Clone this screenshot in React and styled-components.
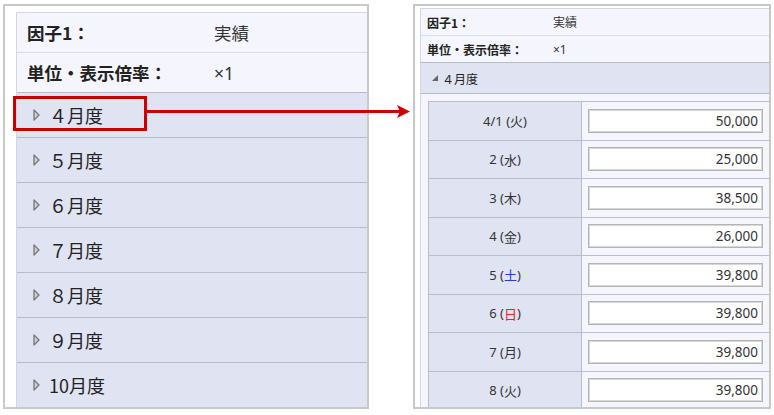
import React from 'react';
import styled, { createGlobalStyle } from 'styled-components';

const Global = createGlobalStyle`
  html, body { margin: 0; padding: 0; background: #fff; }
  body { font-family: "Noto Sans CJK JP", "Noto Sans", sans-serif; color: #222; }
`;

const Stage = styled.div`
  position: relative;
  width: 774px;
  height: 415px;
  overflow: hidden;
  box-sizing: border-box;
  padding: 4px 0 0 3px;
  display: flex;
  align-items: flex-start;
`;

const Panel = styled.div`
  box-sizing: border-box;
  width: ${(p) => p.$w}px;
  height: 405px;
  margin-left: ${(p) => p.$ml || 0}px;
  border: 2px solid #c8c8c8;
  padding: ${(p) => p.$pad};
  background: #fff;
  overflow: hidden;
`;

const Sheet = styled.div`
  height: 100%;
  border-left: 1px solid #d2d5e4;
  border-top: 1px solid #d2d5e4;
  display: flex;
  flex-direction: column;
`;

const InfoRow = styled.div`
  flex: none;
  box-sizing: border-box;
  height: ${(p) => p.$h}px;
  display: grid;
  grid-template-columns: ${(p) => p.$label}px 1fr;
  align-items: center;
  padding-left: ${(p) => p.$pl}px;
  background: #f5f6fd;
  border-bottom: 1px solid #d6d9e8;
  font-size: ${(p) => p.$fs}px;
`;

const Label = styled.span`
  font-weight: 700;
  color: #222;
`;

const Value = styled.span`
  font-family: "Noto Sans", "Noto Sans CJK JP", sans-serif;
  color: #333;
`;

const MonthRow = styled.div`
  flex: none;
  box-sizing: border-box;
  height: ${(p) => p.$h}px;
  display: flex;
  align-items: center;
  gap: ${(p) => p.$gap}px;
  padding-left: ${(p) => p.$pl}px;
  background: #e0e3f1;
  border-top: 1px solid #b7bbca;
  margin-top: -1px;
  border-bottom: 1px solid #b7bbca;
  font-size: ${(p) => p.$fs}px;
  color: #222;
`;

const MonthBody = styled.div`
  flex: 1;
  background: #f5f6fd;
  padding: 7px 0 0 7px;
  overflow: hidden;
`;

const Table = styled.div`
  border-left: 1px solid #b9bdcc;
  border-top: 1px solid #b9bdcc;
`;

const DayRow = styled.div`
  display: grid;
  grid-template-columns: 153px 1fr;
  height: 38.5px;
`;

const DateCell = styled.div`
  background: #e0e3f1;
  border-right: 1px solid #b9bdcc;
  border-bottom: 1px solid #b9bdcc;
  display: flex;
  align-items: center;
  justify-content: center;
  font-family: "Noto Sans", "Noto Sans CJK JP", sans-serif;
  font-size: 13px;
  color: #333;
  white-space: pre;
`;

const Dow = styled.span`
  font-family: "Noto Sans CJK JP", sans-serif;
  color: ${(p) => p.$c || '#333'};
`;

const ValueCell = styled.div`
  background: #f5f6fd;
  border-bottom: 1px solid #b9bdcc;
  display: flex;
  align-items: center;
  padding: 0 6px;
`;

const NumInput = styled.input`
  box-sizing: border-box;
  width: 100%;
  height: 24px;
  border: 1px solid #b4b4b4;
  box-shadow: inset 0 0 0 1px #d8d8d8;
  background: #fff;
  text-align: right;
  padding: 0 4px;
  font-family: "Noto Sans", sans-serif;
  font-size: 13.5px;
  color: #333;
  outline: none;
`;

const Highlight = styled.div`
  position: absolute;
  left: 13px;
  top: 96px;
  width: 134px;
  height: 35px;
  box-sizing: border-box;
  border: 3px solid #cc0000;
  pointer-events: none;
`;

const ArrowSvg = styled.svg`
  position: absolute;
  left: 0;
  top: 0;
  pointer-events: none;
`;

const Collapsed = () => (
  <svg width="7" height="12" viewBox="0 0 7 12">
    <polygon points="1,1 6,6 1,11" fill="#d0d0d0" stroke="#787878" strokeWidth="1.3" strokeLinejoin="round" />
  </svg>
);

const Expanded = () => (
  <svg width="6" height="6" viewBox="0 0 6 6">
    <polygon points="6,0 6,6 0,6" fill="#666" />
  </svg>
);

const months = ['４月度', '５月度', '６月度', '７月度', '８月度', '９月度', '10月度'];

const days = [
  { d: '4/1', w: '火', v: '50,000' },
  { d: '2', w: '水', v: '25,000' },
  { d: '3', w: '木', v: '38,500' },
  { d: '4', w: '金', v: '26,000' },
  { d: '5', w: '土', v: '39,800', c: '#1f3fd6' },
  { d: '6', w: '日', v: '39,800', c: '#d8262c' },
  { d: '7', w: '月', v: '39,800' },
  { d: '8', w: '火', v: '39,800' },
];

export default function App() {
  return (
    <>
      <Global />
      <Stage>
        <Panel $w={366} $pad="6px 0 0 11px">
          <Sheet>
            <InfoRow $h={40} $label={187} $pl={10} $fs={17.5}>
              <Label>因子1：</Label>
              <Value>実績</Value>
            </InfoRow>
            <InfoRow $h={40} $label={187} $pl={10} $fs={17.5}>
              <Label>単位・表示倍率：</Label>
              <Value>×1</Value>
            </InfoRow>
            {months.map((m) => (
              <MonthRow key={m} $h={46} $pl={16} $gap={9} $fs={18}>
                <Collapsed />
                <span>{m}</span>
              </MonthRow>
            ))}
          </Sheet>
        </Panel>

        <Panel $w={358} $ml={44} $pad="2px 0 0 5px">
          <Sheet>
            <InfoRow $h={27} $label={126} $pl={6} $fs={12}>
              <Label>因子1：</Label>
              <Value>実績</Value>
            </InfoRow>
            <InfoRow $h={27} $label={126} $pl={6} $fs={12}>
              <Label>単位・表示倍率：</Label>
              <Value>×1</Value>
            </InfoRow>
            <MonthRow $h={32} $pl={11} $gap={4} $fs={12}>
              <Expanded />
              <span>４月度</span>
            </MonthRow>
            <MonthBody>
              <Table>
                {days.map((r, i) => (
                  <DayRow key={i}>
                    <DateCell>
                      {r.d} (<Dow $c={r.c}>{r.w}</Dow>)
                    </DateCell>
                    <ValueCell>
                      <NumInput defaultValue={r.v} readOnly />
                    </ValueCell>
                  </DayRow>
                ))}
              </Table>
            </MonthBody>
          </Sheet>
        </Panel>

        <Highlight />
        <ArrowSvg width="774" height="415" viewBox="0 0 774 415">
          <line x1="147" y1="111.5" x2="400" y2="111.5" stroke="#cc0000" strokeWidth="3" />
          <polygon points="397,105 410,111.5 397,118 400,111.5" fill="#cc0000" />
        </ArrowSvg>
      </Stage>
    </>
  );
}
